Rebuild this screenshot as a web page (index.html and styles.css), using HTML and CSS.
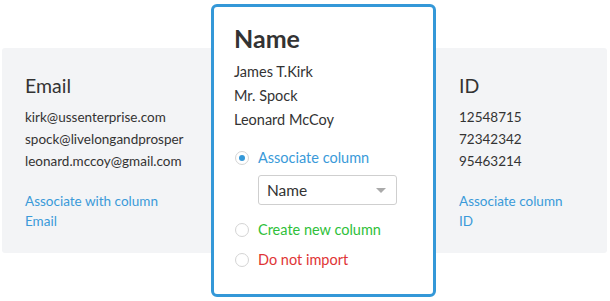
FILE: index.html
```html
<!DOCTYPE html>
<html lang="en">
<head>
  <meta charset="UTF-8" />
  <title>Import columns</title>
  <link rel="stylesheet" href="styles.css">
</head>
<body>

<div class="band">
  <!-- EMAIL COLUMN -->
  <div class="column col-email">
    <h2>Email</h2>
    <ul class="values">
      <li>kirk@ussenterprise.com</li>
      <li>spock@livelongandprosper</li>
      <li>leonard.mccoy@gmail.com</li>
    </ul>
    <a class="link" href="#">Associate with column<br>Email</a>
  </div>

  <!-- ACTIVE COLUMN -->
  <div class="card">
    <h2>Name</h2>
    <ul class="values">
      <li>James T.Kirk</li>
      <li>Mr. Spock</li>
      <li>Leonard McCoy</li>
    </ul>

    <label class="option associate">
      <span class="radio checked"></span>
      Associate column
    </label>
    <div class="select">
      <span>Name</span>
      <span class="caret"></span>
    </div>
    <label class="option create">
      <span class="radio"></span>
      Create new column
    </label>
    <label class="option skip">
      <span class="radio"></span>
      Do not import
    </label>
  </div>

  <!-- ID COLUMN -->
  <div class="column col-id">
    <h2>ID</h2>
    <ul class="values">
      <li>12548715</li>
      <li>72342342</li>
      <li>95463214</li>
    </ul>
    <a class="link" href="#">Associate column<br>ID</a>
  </div>
</div>

</body>
</html>
```

FILE: styles.css
```css
body {
  margin: 0;
  padding-bottom: 48px;
  font-family: "Lato", "Open Sans", sans-serif;
  color: #333;
  background: #fff;
}

.band {
  display: flex;
  align-items: flex-start;
  margin: 48px 3px 0 2px;
  background: #f3f4f6;
  border-radius: 3px;
}

.column {
  padding: 26px 0 0 23px;
  box-sizing: border-box;
}

.col-email {
  width: 209px;
}

.col-id {
  flex: 1;
}

h2 {
  margin: 0;
  font-weight: normal;
  font-size: 19.5px;
  line-height: 24px;
}

.values {
  list-style: none;
  margin: 8px 0 0;
  padding: 0;
  font-size: 13.5px;
  line-height: 22px;
}

.link {
  display: block;
  margin-top: 19px;
  font-size: 13.5px;
  line-height: 20px;
  color: #3a9ad9;
  text-decoration: none;
}

.card {
  width: 225px;
  height: 293px;
  box-sizing: border-box;
  margin: -44px 0 -44px;
  padding: 17px 20px 0 20px;
  background: #fff;
  border: 3px solid #3498d8;
  border-radius: 6px;
}

.card h2 {
  font-weight: bold;
  font-size: 25px;
  line-height: 28px;
}

.card .values {
  margin-top: 8px;
  font-size: 14.5px;
  line-height: 24px;
}

.option {
  display: flex;
  align-items: center;
  gap: 9px;
  font-size: 14.5px;
  line-height: 20px;
  padding-left: 1px;
}

.associate {
  margin-top: 16px;
  color: #3a9ad9;
}

.create {
  margin-top: 15px;
  color: #2fbf3a;
}

.skip {
  margin-top: 10px;
  color: #e03535;
}

.radio {
  width: 14px;
  height: 14px;
  box-sizing: border-box;
  border: 1px solid #d4d4d4;
  border-radius: 50%;
  background: #fff;
  position: relative;
}

.radio.checked::after {
  content: "";
  position: absolute;
  left: 3px;
  top: 3px;
  width: 6px;
  height: 6px;
  border-radius: 50%;
  background: #3498d8;
}

.select {
  display: flex;
  align-items: center;
  justify-content: space-between;
  width: 139px;
  height: 30px;
  box-sizing: border-box;
  margin: 7px 0 0 24px;
  padding: 0 10px 0 8px;
  border: 1px solid #cfcfcf;
  border-radius: 3px;
  font-size: 15.5px;
}

.caret {
  width: 0;
  height: 0;
  border-left: 5px solid transparent;
  border-right: 5px solid transparent;
  border-top: 5px solid #aaa;
}
```
